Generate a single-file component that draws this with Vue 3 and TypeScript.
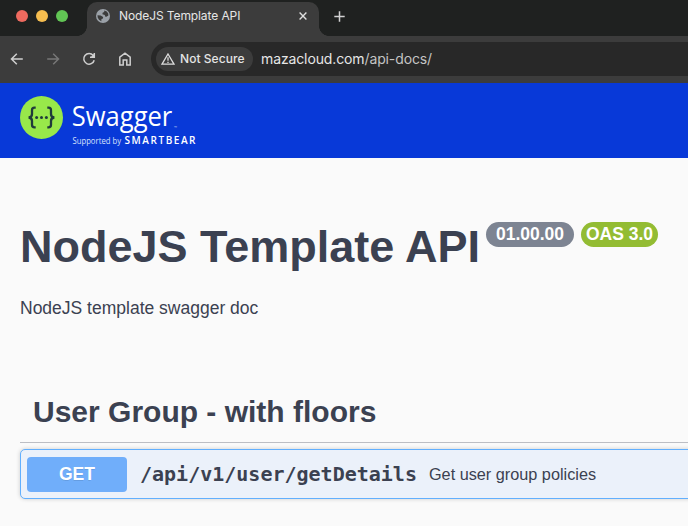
<script setup lang="ts">
interface Operation {
  method: string
  path: string
  summary: string
}

const title = 'NodeJS Template API'
const version = '01.00.00'
const spec = 'OAS 3.0'
const lights: string[] = ['red', 'yellow', 'green']
const operations: Operation[] = [
  { method: 'GET', path: '/api/v1/user/getDetails', summary: 'Get user group policies' },
]
</script>

<template>
  <div class="window">
    <header class="tabs">
      <div class="lights">
        <i v-for="light in lights" :key="light" :class="light"></i>
      </div>
      <div class="tab">
        <svg class="globe" width="14" height="14" viewBox="0 0 14 14">
          <circle cx="7" cy="7" r="7" fill="#9ba1a8" />
          <path d="M8.3 1.5 8.2 3.1 6.6 3.7 6.4 5.2 8.8 6 9.1 7.4 10.4 7.8 12.4 6.6 12.2 4.6 10.8 2.5ZM1.5 6.2 4.7 6.4 7.1 8.1 7 9.5 5.5 10.1 5.3 12.2 3 10.8 1.7 8.6Z" fill="#3c3c3c" />
        </svg>
        <span class="tab-title">{{ title }}</span>
        <svg class="close" width="8" height="8" viewBox="0 0 8 8"><path d="M.6.6 7.4 7.4M7.4.6.6 7.4" /></svg>
      </div>
      <svg class="plus" width="11" height="11" viewBox="0 0 11 11"><path d="M5.5.3V10.7M.3 5.5H10.7" /></svg>
    </header>

    <nav class="toolbar">
      <svg class="nav-icon" viewBox="0 0 16 16"><path d="M13.8 8H2.5M7.8 2.7 2.5 8 7.8 13.3" /></svg>
      <svg class="nav-icon dim" viewBox="0 0 16 16"><path d="M2.2 8H13.5M8.2 2.7 13.5 8 8.2 13.3" /></svg>
      <svg class="nav-icon" viewBox="0 0 16 16"><path d="M12.2 4.5A5.3 5.3 0 1 0 13.2 9.2M13.3 2V6.2H9" /><path class="tip" d="M13.9 2V6.8H9.2Z" /></svg>
      <svg class="nav-icon" viewBox="0 0 16 16"><path d="M2.8 6.2 8 2.1 13.2 6.2V14H9.8V9.1H6.2V14H2.8Z" /></svg>
      <div class="omnibox">
        <div class="chip">
          <svg width="14" height="12" viewBox="0 0 14 12"><path d="M7 1 13 11.2H1Z" /><path d="M7 4.3V7.7M7 8.7V9.9" /></svg>
          <span>Not Secure</span>
        </div>
        <span class="url">mazacloud.com<em>/api-docs/</em></span>
      </div>
    </nav>

    <div class="topbar">
      <svg width="180" height="52" viewBox="0 0 180 52">
        <circle cx="21.5" cy="21.5" r="21.5" fill="#98e84a" />
        <g fill="none" stroke="#203b3b" stroke-width="2.3">
          <path d="M15.7 11.6H14.5Q12 11.6 12 14.2V18Q12 21.3 8.6 21.5Q12 21.7 12 25V28.8Q12 31.4 14.5 31.4H15.7" />
          <path d="M27.3 11.6H28.5Q31 11.6 31 14.2V18Q31 21.3 34.4 21.5Q31 21.7 31 25V28.8Q31 31.4 28.5 31.4H27.3" />
        </g>
        <g fill="#203b3b"><circle cx="16.6" cy="21.5" r="1.5" /><circle cx="21.5" cy="21.5" r="1.5" /><circle cx="26.4" cy="21.5" r="1.5" /></g>
        <text class="brand" x="51.8" y="30" textLength="100.5" lengthAdjust="spacingAndGlyphs">Swagger</text>
        <text class="tm" x="154" y="32.5">™</text>
        <text class="support" x="52.5" y="48" textLength="48.5" lengthAdjust="spacingAndGlyphs">Supported by</text>
        <text class="smartbear" x="104.5" y="48" textLength="71" lengthAdjust="spacing">SMARTBEAR</text>
      </svg>
    </div>

    <main>
      <h1>
        <span class="name">{{ title }}</span>
        <span class="badge version">{{ version }}</span>
        <span class="badge oas">{{ spec }}</span>
      </h1>
      <p class="description">NodeJS template swagger doc</p>
      <section>
        <h2>User Group - with floors</h2>
        <div v-for="op in operations" :key="op.path" class="operation">
          <button class="method">{{ op.method }}</button>
          <span class="path">{{ op.path }}</span>
          <span class="summary">{{ op.summary }}</span>
        </div>
      </section>
    </main>
  </div>
</template>

<style>
body { background: #fafafa; overflow: hidden; }
</style>

<style scoped>
* { box-sizing: border-box; }
.window { width: 688px; height: 526px; overflow: hidden; background: #fafafa; color: #3b4151; font-family: "Liberation Sans", Arial, sans-serif; }
svg { display: block; flex-shrink: 0; }
.tabs { height: 36px; display: flex; align-items: flex-start; background: #1f2120; }
.lights { width: 87px; height: 36px; padding: 10px 0 0 16px; display: flex; gap: 8px; background: #1f2120; }
.lights i { width: 12px; height: 12px; border-radius: 50%; }
.red { background: #ee6a5f; }
.yellow { background: #f5bd4f; }
.green { background: #61c554; }
.tab { position: relative; width: 232px; height: 34px; margin-top: 2px; padding: 0 12px 6px 9px; display: flex; align-items: center; background: #3c3c3c; border-radius: 10px 10px 0 0; }
.tab::before, .tab::after { content: ""; position: absolute; bottom: 0; width: 10px; height: 10px; }
.tab::before { left: -10px; background: radial-gradient(circle at 0 0, transparent 9.6px, #3c3c3c 10.2px); }
.tab::after { right: -10px; background: radial-gradient(circle at 100% 0, transparent 9.6px, #3c3c3c 10.2px); }
.tab-title { margin-left: 9px; font: 12px/16px Inter, sans-serif; letter-spacing: -.1px; color: #e6e6e6; white-space: nowrap; }
.close { margin-left: auto; stroke: #dedede; stroke-width: 1.4; fill: none; }
.plus { margin: 10.5px 0 0 14.5px; stroke: #d2d2d2; stroke-width: 1.5; fill: none; }
.toolbar { height: 47px; padding: 6px 0 7px 9px; display: flex; align-items: center; background: #3c3c3c; }
.nav-icon { width: 16px; height: 16px; margin-right: 20px; fill: none; stroke: #cfcfcf; stroke-width: 1.5; }
.nav-icon.dim { stroke: #777; }
.nav-icon .tip { fill: #cfcfcf; stroke: none; }
.omnibox { flex: 1; height: 34px; margin-left: -2px; padding-left: 5px; display: flex; align-items: center; background: #282828; border-radius: 17px 0 0 17px; }
.chip { width: 97px; height: 24px; padding-left: 5px; display: flex; align-items: center; gap: 5px; background: #3c3c3c; border-radius: 12px; color: #e4e4e4; font: 500 12px/16px Inter, sans-serif; letter-spacing: .05px; white-space: nowrap; }
.chip svg { fill: none; stroke: #ddd; stroke-width: 1.3; }
.url { margin-left: 8px; font: 14px/18px Inter, sans-serif; letter-spacing: -.12px; color: #e6e6e6; }
.url em { font-style: normal; color: #c4c4c4; }
.topbar { height: 75px; padding: 13px 0 0 20px; background: #0839d8; }
.topbar text { fill: #fff; font-family: "Open Sans", sans-serif; }
.brand { font-size: 28px; }
.topbar .tm { font-size: 4px; fill: #b6c5f5; }
.topbar .support { font-size: 8.5px; fill: #d9e1fb; }
.topbar .smartbear { font-size: 10px; font-weight: 600; }
main { padding: 62px 0 0 20px; }
h1 { height: 56px; margin: 0; display: flex; align-items: flex-start; font-size: 45px; line-height: 52px; white-space: nowrap; }
.name { width: 466px; padding-top: 1px; }
.badge { height: 25px; margin-top: 2px; border-radius: 13px; text-align: center; font-size: 17.5px; line-height: 25px; color: #fff; }
.version { width: 88px; background: #7d8492; }
.oas { width: 77px; margin-left: 7px; background: #93bc33; }
.description { margin: 22px 0 0; font-size: 17.5px; line-height: 20px; }
section { margin-top: 68px; }
h2 { height: 57px; margin: 0; padding: 8px 0 0 13px; border-bottom: 1px solid #bcbec4; font-size: 30px; line-height: 36px; }
.operation { height: 50px; margin: 6px -8px 0 0; padding: 0 6px; display: flex; align-items: center; background: #ebf1fa; border: 1px solid #61affe; border-radius: 5px; box-shadow: 0 0 4px rgba(0, 0, 0, .19); }
.method { width: 100px; height: 35px; padding: 0; border: 0; border-radius: 4px; background: #70aefa; color: #fff; font: 700 17.5px/35px "Liberation Sans", sans-serif; text-shadow: 0 1px 0 rgba(0, 0, 0, .1); }
.path { margin-left: 13px; font: 700 20px/24px "DejaVu Sans Mono", monospace; }
.summary { margin-left: 12px; font-size: 16.25px; line-height: 20px; }
</style>
